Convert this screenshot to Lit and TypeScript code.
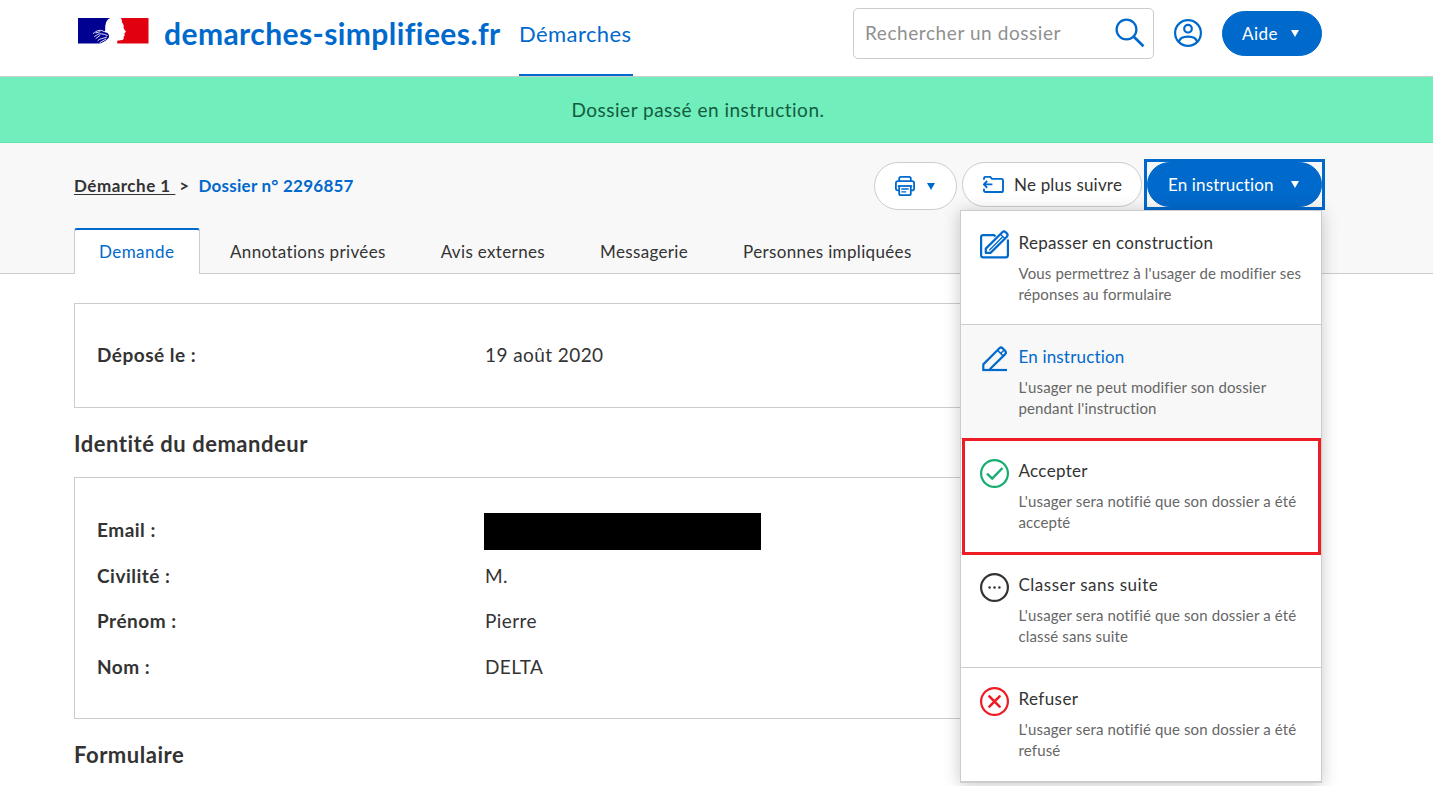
import { LitElement, html, css, svg } from "lit";
import { customElement } from "lit/decorators.js";
import { classMap } from "lit/directives/class-map.js";

const marianne = html`<svg class="flag" viewBox="0 0 212 76" preserveAspectRatio="none">
  <path fill="#000091" d="M0 0H97C89 3 83 11 83 21C83 31 87 37 88 43C94 50 96 56 90 62C82 70 74 73 66 76H0Z" />
  <path fill="#fff" d="M83 21C80 30 84 36 80 41L92 46L97 56L88 66L76 73L80 76H115V30L95 14Z" />
  <g fill="none" stroke="#fff" stroke-width="2.6" stroke-linecap="round">
    <path d="M46 46C52 43 55 38 63 37C70 35 75 40 84 42" />
    <path d="M50 55C58 50 62 46 70 47C77 48 82 50 88 52" />
    <path d="M54 61L66 52M60 67C68 60 74 62 86 57M66 73L84 63" />
    <path d="M54 44L66 41" />
  </g>
  <path fill="#e1000f" d="M129 0H212V76H118V68C127 66 135 68 137 62C138 59 137 57 138 54L141 52L139 47L144 41C142 37 138 33 137 28C139 22 136 18 132 12C133 8 131 4 129 0Z" />
</svg>`;

const searchIcon = html`<svg class="search-icon" viewBox="0 0 30 30" fill="none" stroke="#0069cc">
  <circle cx="11.5" cy="11.5" r="9.9" stroke-width="2.3" />
  <path d="M18.8 18.8L28.5 28.3" stroke-width="2.7" />
</svg>`;

const accountIcon = html`<svg class="account" viewBox="0 0 28 28" fill="none" stroke="#0069cc" stroke-width="2.2">
  <circle cx="14" cy="14" r="12.9" />
  <circle cx="14" cy="9.7" r="3.8" />
  <path d="M5 22.8C5.5 19.5 9.3 17.6 14 17.6S22.5 19.5 23 22.8" />
</svg>`;

const printIcon = html`<svg class="print" viewBox="0 0 20 20" fill="none" stroke="#0069cc" stroke-width="1.8" stroke-linejoin="round">
  <path d="M4.2 5V2.6Q4.2 .9 5.9 .9H14.1Q15.8 .9 15.8 2.6V5" />
  <path d="M4 14.3H2.9Q.9 14.3 .9 12.4V7.2Q.9 5.2 2.9 5.2H17.1Q19.1 5.2 19.1 7.2V12.4Q19.1 14.3 17.1 14.3H16" />
  <path d="M2.8 10H17.2" />
  <path d="M4.2 10V17.4Q4.2 19.1 5.9 19.1H14.1Q15.8 19.1 15.8 17.4V10" />
  <path d="M6.3 13H13.7M6.3 15.8H11.2" stroke-width="1.3" />
</svg>`;

const folderIcon = html`<svg class="folder" viewBox="0 0 21 17" fill="none" stroke="#0069cc" stroke-width="1.9" stroke-linejoin="round">
  <path d="M1 3.8V2.5Q1 .9 2.6 .9H7.2L9 2.9H18.4Q20 2.9 20 4.5V14.4Q20 16 18.4 16H2.6Q1 16 1 14.4V12.8" />
  <path d="M9.4 8.4H1M4.2 5L.9 8.4L4.2 11.8" />
</svg>`;

const icons = {
  compose: svg`<g fill="none" stroke="#0069cc" stroke-width="2.2" stroke-linejoin="round">
    <path d="M15.6 6.4L13.9 5.1H3.2Q1.1 5.1 1.1 7.1V25Q1.1 27.4 3.4 27.4H25.6Q27.9 27.4 27.9 25V9.5" />
    <path d="M5.8 22.9V18.6L22.3 2.2Q24 .7 25.7 2.2L27 3.5Q28.3 5.1 26.8 6.7L10.5 22.9Z" />
    <path d="M20.6 4.2L25 8.6M9.3 20.2L22.4 7" stroke-width="1.3" /></g>`,
  pencil: svg`<g fill="none" stroke="#0069cc" stroke-width="2.2" stroke-linejoin="round">
    <path d="M3.3 25.4V20.4L19.4 4.3Q21 2.7 22.6 4.3L25.2 6.9Q26.7 8.5 25.2 10.1L9.8 25.2" />
    <path d="M17.6 6.4L23.2 12M20.6 9.6L23.6 6.4" stroke-width="1.5" />
    <path d="M2.3 26H27" /></g>`,
  accept: svg`<g fill="none" stroke="#15ad70" stroke-width="2.2"><circle cx="14.5" cy="14.5" r="13.4" />
    <path d="M7 14.6L12.2 19.5L22.5 9" stroke-width="2.4" /></g>`,
  close: svg`<circle cx="14.5" cy="14.5" r="13.4" fill="none" stroke="#333" stroke-width="2.2" />
    <g fill="#333"><circle cx="9.6" cy="14.5" r="1.25" /><circle cx="14.5" cy="14.5" r="1.25" /><circle cx="19.4" cy="14.5" r="1.25" /></g>`,
  refuse: svg`<g fill="none" stroke="#ee1c24" stroke-width="2.2"><circle cx="14.5" cy="14.5" r="13.4" />
    <path d="M9.4 9.4L19.6 19.6M19.6 9.4L9.4 19.6" stroke-width="2.6" stroke-linecap="round" /></g>`,
};

const menu: { icon: keyof typeof icons; title: string; lines: [string, string]; cls?: string }[] = [
  { icon: "compose", title: "Repasser en construction", lines: ["Vous permettrez à l'usager de modifier ses", "réponses au formulaire"] },
  { icon: "pencil", title: "En instruction", lines: ["L'usager ne peut modifier son dossier", "pendant l'instruction"], cls: "selected" },
  { icon: "accept", title: "Accepter", lines: ["L'usager sera notifié que son dossier a été", "accepté"], cls: "framed" },
  { icon: "close", title: "Classer sans suite", lines: ["L'usager sera notifié que son dossier a été", "classé sans suite"], cls: "wide" },
  { icon: "refuse", title: "Refuser", lines: ["L'usager sera notifié que son dossier a été", "refusé"], cls: "last" },
];

const tabs = ["Demande", "Annotations privées", "Avis externes", "Messagerie", "Personnes impliquées"];

const identity: [string, string | null][] = [
  ["Email :", null],
  ["Civilité :", "M."],
  ["Prénom :", "Pierre"],
  ["Nom :", "DELTA"],
];

@customElement("app-root")
export class AppRoot extends LitElement {
  static styles = css`
    :host { display: block; height: 786px; overflow: hidden; background: #fff; color: #333;
      font-family: Lato, "Open Sans", sans-serif; font-size: 17px; letter-spacing: 0.31px; white-space: nowrap; }
    * { box-sizing: border-box; }
    svg { display: block; flex: none; }
    .header { height: 77px; border-bottom: 1px solid #ccc; padding: 0 111px 0 78px; display: flex; align-items: flex-start; }
    .flag { width: 70.5px; height: 25.5px; margin-top: 18px; }
    .brand { margin-left: 15.5px; width: 355px; font-size: 30px; line-height: 36px; padding-top: 15px; font-weight: 700; color: #0069cc; letter-spacing: 0.42px; }
    .nav { width: 114px; height: 76px; border-bottom: 2px solid #0069cc; color: #0069cc; font-size: 22px; line-height: 28px; padding: 20px 0 0; letter-spacing: 0.43px; }
    .search { margin-left: auto; margin-top: 8px; width: 301px; height: 51px; border: 1px solid #ccc; border-radius: 5px; display: flex; justify-content: space-between; padding: 0 8px 0 11px; font-size: 19px; line-height: 48px; color: #909090; letter-spacing: 0.57px; }
    .search-icon { width: 30px; height: 30px; margin-top: 9px; }
    .account { width: 28px; height: 28px; margin: 18.5px 20px 0; }
    .btn { display: flex; align-items: center; height: 45px; border-radius: 24px; border: 1px solid #ccc; background: #fff; padding: 0 19px; }
    .primary { background: #0069cc; border-color: #0069cc; color: #fff; }
    .caret { width: 0; height: 0; border: 4.5px solid transparent; border-top: 7px solid currentColor; border-bottom: 0; }
    .help { width: 100px; margin-top: 11px; justify-content: space-between; padding-right: 22px; letter-spacing: 0.5px; }
    .flash { height: 66px; background: #70eebb; border-bottom: 1px solid #5ee8b0; color: #145c41; text-align: center; font-size: 19px; line-height: 66px; letter-spacing: 0.5px; padding-right: 37px; }
    .sub { height: 131px; background: #f8f8f8; border-bottom: 1px solid #ccc; padding: 19px 111px 0 74px; }
    .top { display: flex; align-items: flex-start; height: 48px; }
    .crumbs { font-weight: 700; line-height: 48px; display: flex; flex: 1; }
    .crumbs .link { text-decoration: underline; text-underline-offset: 2px; letter-spacing: 0.5px; white-space: pre; }
    .crumbs .sep { margin: 0 9px 0 4px; }
    .crumbs .current { color: #0069cc; letter-spacing: 0.24px; }
    .blue { color: #0069cc; }
    .print-btn { width: 83px; height: 48px; margin-right: 5px; padding-left: 20px; padding-right: 21.5px; justify-content: space-between; }
    .print { width: 20px; height: 20px; }
    .follow { width: 180px; margin-right: 5px; padding-left: 20px; gap: 10px; letter-spacing: 0.2px; }
    .folder { width: 21px; height: 17px; }
    .state { position: relative; height: 45px; outline: 3px solid #0069cc; }
    .state-btn { width: 175px; padding: 0 22px 0 20px; justify-content: space-between; letter-spacing: 0.15px; }
    .tabs { display: flex; gap: 5px; margin-top: 18px; }
    .tab { height: 46px; line-height: 46px; padding: 1px 25px 0; letter-spacing: 0.35px; }
    .tab.active { width: 126px; background: #fff; color: #0069cc; padding: 0 24px; border: 1px solid #ccc; border-top: 2px solid #0069cc; border-bottom: 0; border-radius: 3px 3px 0 0; letter-spacing: 0.45px; line-height: 44px; }
    .menu { position: absolute; z-index: 2; top: 48px; right: 0; width: 362px; background: #fff; border: 1px solid #ccc; border-bottom-width: 2px; box-shadow: 0 2px 16px rgba(0, 0, 0, 0.22); }
    .item { position: relative; display: flex; height: 114px; padding: 19px 0 0 19px; border-bottom: 1px solid #ccc; }
    .item.selected { background: #f8f8f8; }
    .item.selected .title { color: #0069cc; letter-spacing: 0.17px; }
    .item.wide { height: 115px; }
    .item.wide .title { letter-spacing: 0.5px; }
    .item.wide svg { margin-top: 1px; }
    .item.last { border-bottom: 0; height: 113px; }
    .item.last .title { letter-spacing: 0.42px; }
    .item.last .text { margin-top: -1px; }
    .item.framed::after { content: ""; position: absolute; inset: -1px 0 -3px 1px; border: 3px solid #ee1c24; z-index: 1; }
    .item svg { width: 29px; height: 29px; margin-right: 9.5px; }
    .item.framed svg { margin-top: 0.5px; }
    .title { line-height: 26px; }
    .desc { margin-top: 7px; font-size: 15px; line-height: 20.6px; color: #666; letter-spacing: 0.13px; }
    .body { padding: 29px 111px 0 74px; font-size: 19px; }
    .card { border: 1px solid #ccc; padding: 28px 22px; }
    .card.single { height: 105px; }
    .card.identity { height: 242px; padding-top: 28.5px; }
    .row { display: grid; grid-template-columns: 388px 1fr; height: 45.7px; align-items: center; }
    .row .label { font-weight: 700; letter-spacing: 0.5px; }
    .value { letter-spacing: 0.42px; }
    .redacted { width: 277px; height: 37px; background: #000; margin: 4px 0 0 -1px; }
    .heading { height: 69px; line-height: 72px; font-size: 22px; font-weight: 700; letter-spacing: 0.52px; }
  `;

  render() {
    return html`
      <header class="header">
        ${marianne}
        <div class="brand">demarches-simplifiees.fr</div>
        <div class="nav">Démarches</div>
        <div class="search"><span>Rechercher un dossier</span>${searchIcon}</div>
        ${accountIcon}
        <div class="btn primary help">Aide<span class="caret"></span></div>
      </header>
      <div class="flash">Dossier passé en instruction.</div>
      <section class="sub">
        <div class="top">
          <div class="crumbs">
            <span class="link">Démarche 1 </span><span class="sep">&gt;</span><span class="current">Dossier n° 2296857</span>
          </div>
          <div class="btn print-btn blue">${printIcon}<span class="caret"></span></div>
          <div class="btn follow">${folderIcon}<span>Ne plus suivre</span></div>
          <div class="state">
            <div class="btn primary state-btn">En instruction<span class="caret"></span></div>
            <div class="menu">
              ${menu.map((m) => html`<div class="item ${m.cls ?? ""}">
                <svg viewBox="0 0 29 29">${icons[m.icon]}</svg>
                <div class="text">
                  <div class="title">${m.title}</div>
                  <div class="desc">${m.lines[0]}<br />${m.lines[1]}</div>
                </div>
              </div>`)}
            </div>
          </div>
        </div>
        <nav class="tabs">
          ${tabs.map((t, i) => html`<div class=${classMap({ tab: true, active: i === 0 })}>${t}</div>`)}
        </nav>
      </section>
      <main class="body">
        <div class="card single">
          <div class="row"><span class="label">Déposé le :</span><span class="value">19 août 2020</span></div>
        </div>
        <div class="heading">Identité du demandeur</div>
        <div class="card identity">
          ${identity.map(([k, v]) => html`<div class="row">
            <span class="label">${k}</span>
            ${v === null ? html`<span class="redacted"></span>` : html`<span class="value">${v}</span>`}
          </div>`)}
        </div>
        <div class="heading">Formulaire</div>
      </main>
    `;
  }
}
